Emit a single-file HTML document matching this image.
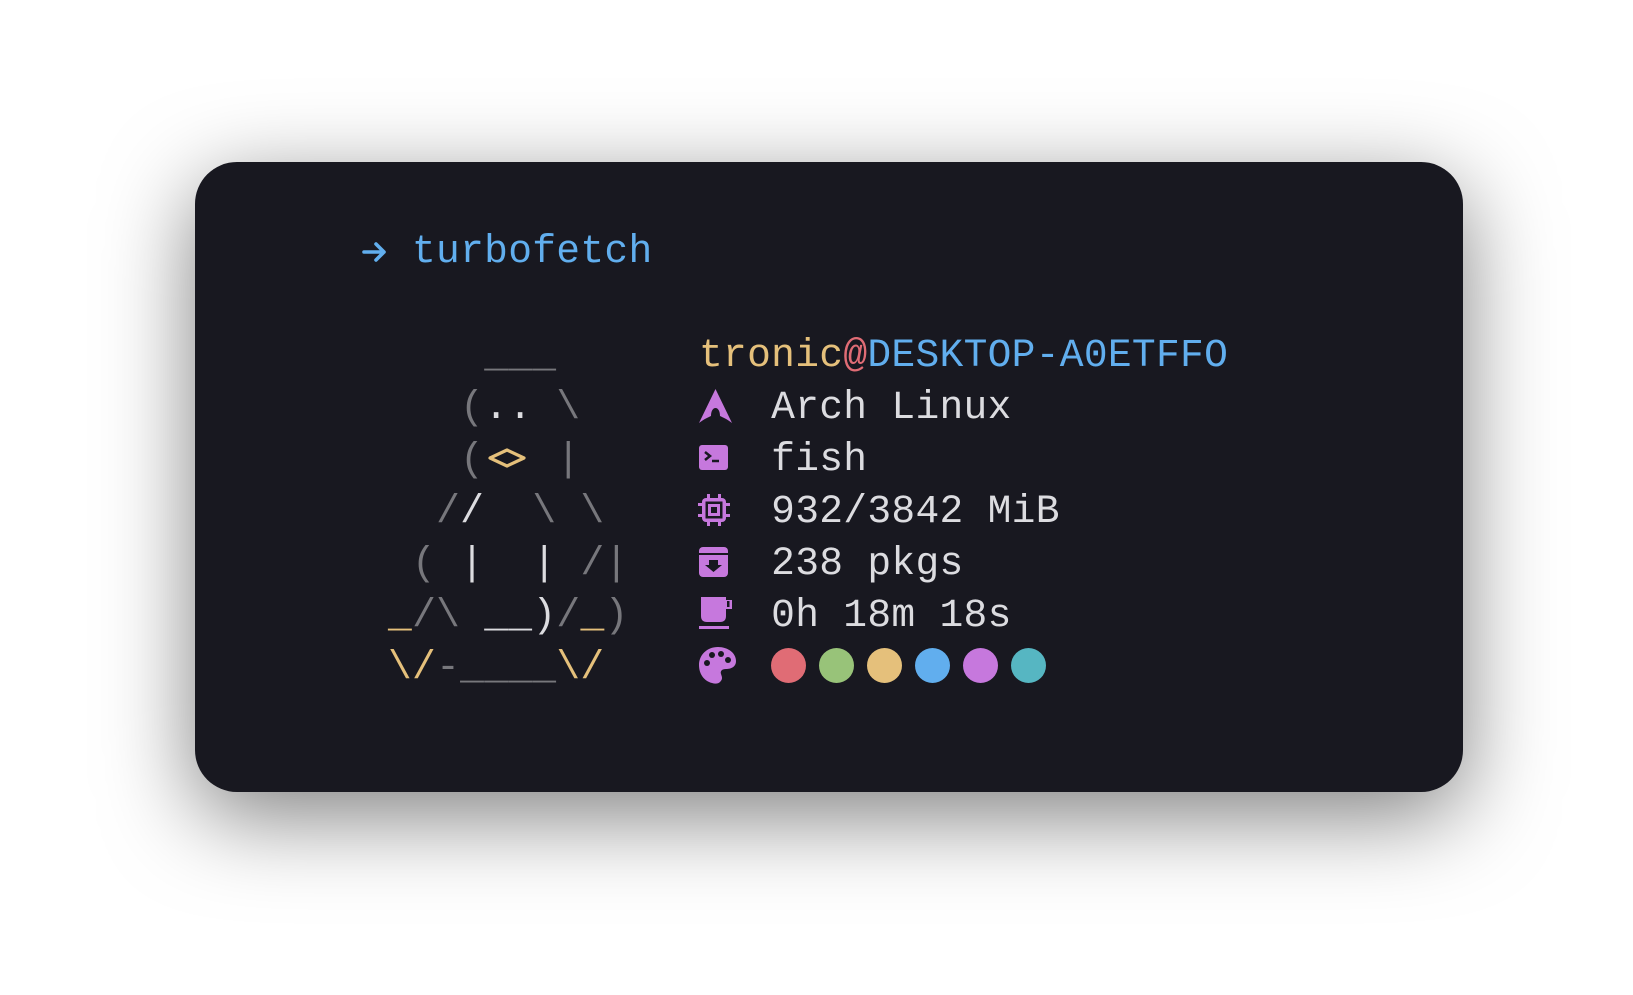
<!DOCTYPE html>
<html><head><meta charset="utf-8"><style>
html,body{margin:0;padding:0;background:#fff;width:1633px;height:995px;overflow:hidden}
.card{position:absolute;left:195px;top:162px;width:1268px;height:630px;border-radius:42px;background:#181820;box-shadow:0 24px 90px rgba(0,0,0,0.5)}
.l{position:absolute;font-family:"Liberation Mono","DejaVu Sans Mono",monospace;font-size:39.6px;letter-spacing:0.3px;line-height:52px;white-space:pre;color:#dcdce0}
.g{color:#77777c}.w{color:#dcdce0}.y{color:#e5c07b}.b{color:#61aeee}.r{color:#e06c75}
.dot{position:absolute;width:35px;height:35px;border-radius:50%;top:648px}
svg{position:absolute}
</style></head><body>
<div class="card"></div>
<svg style="left:362px;top:240px" width="26" height="24" viewBox="0 0 26 24"><path d="M2 12 H22 M14 4 L22 12 L14 20" stroke="#61aeee" stroke-width="3.6" fill="none" stroke-linecap="round" stroke-linejoin="round"/></svg>
<div class="l b" style="left:412px;top:226px">turbofetch</div>
<div class="l g" style="left:388px;top:330px">    ___</div>
<div class="l g" style="left:388px;top:382px">   (<span class="w">..</span> \</div>
<div class="l g" style="left:388px;top:434px">   (   |</div>
<svg style="left:487px;top:446px" width="40" height="24" viewBox="0 0 40 24"><path d="M3 12 L20 4 L37 12 L20 20 Z" fill="none" stroke="#e5c07b" stroke-width="3.2" stroke-linejoin="round"/></svg>
<div class="l g" style="left:388px;top:486px">  /<span class="w">/</span>  \ \</div>
<div class="l g" style="left:388px;top:538px"> ( <span class="w">|</span>  <span class="w">|</span> /|</div>
<div class="l g" style="left:388px;top:590px"><span class="y">_</span>/\ <span class="w">__)</span>/<span class="y">_</span>)</div>
<div class="l g" style="left:388px;top:642px"><span class="y">\/</span>-____<span class="y">\/</span></div>

<div class="l" style="left:699px;top:330px"><span class="y">tronic</span><span class="r">@</span><span class="b">DESKTOP-A0ETFFO</span></div>
<div class="l" style="left:699px;top:382px">   Arch Linux</div>
<div class="l" style="left:699px;top:434px">   fish</div>
<div class="l" style="left:699px;top:486px">   932/3842 MiB</div>
<div class="l" style="left:699px;top:538px">   238 pkgs</div>
<div class="l" style="left:699px;top:590px">   0h 18m 18s</div>

<svg style="left:698px;top:388px" width="36" height="36" viewBox="0 0 36 36"><path d="M17.5 1 L34 35 C29 31 24 29 22 28 C22 23 20 20 17.5 20 C15 20 13 23 13 28 C11 29 6 31 1 35 Z" fill="#c678dd"/></svg>
<svg style="left:698px;top:444px" width="32" height="28" viewBox="0 0 32 28"><rect x="1" y="1" width="29" height="25" rx="3" fill="#c678dd"/><path d="M7 8 L12 12 L7 16" stroke="#181820" stroke-width="2.5" fill="none"/><path d="M14 17 H21" stroke="#181820" stroke-width="2.5"/></svg>
<svg style="left:698px;top:494px" width="32" height="32" viewBox="0 0 32 32"><g fill="#c678dd"><rect x="4" y="4" width="24" height="24" rx="4"/><rect x="9" y="0" width="3" height="5"/><rect x="20" y="0" width="3" height="5"/><rect x="9" y="27" width="3" height="5"/><rect x="20" y="27" width="3" height="5"/><rect x="0" y="9" width="5" height="3"/><rect x="0" y="20" width="5" height="3"/><rect x="27" y="9" width="5" height="3"/><rect x="27" y="20" width="5" height="3"/></g><rect x="7.5" y="7.5" width="17" height="17" fill="#181820"/><rect x="10" y="10" width="12" height="12" fill="#c678dd"/><rect x="13" y="13" width="6" height="6" fill="#181820"/></svg>
<svg style="left:698px;top:546px" width="32" height="32" viewBox="0 0 32 32"><rect x="1" y="1" width="29" height="30" rx="4" fill="#c678dd"/><path d="M1 8 H30" stroke="#181820" stroke-width="2"/><path d="M11 14 H20 V19 H24 L15.5 26 L7 19 H11 Z" fill="#181820"/></svg>
<svg style="left:698px;top:596px" width="36" height="34" viewBox="0 0 36 34"><path d="M3 1 H28 V4 H34 V13 H28 V20 C28 24 26 26 22 26 H9 C5 26 3 24 3 20 Z" fill="#c678dd"/><rect x="29" y="5" width="2.5" height="6" fill="#181820"/><rect x="1" y="30" width="30" height="3" fill="#c678dd"/></svg>
<svg style="left:698px;top:646px" width="40" height="40" viewBox="0 0 40 40"><path d="M20 1 C30 1 38 7 38 15 C38 21 33 23 28 23 C24 23 22 25 23 28 C24 31 25 33 22 36 C20 38 17 38 14 37 C6 35 1 28 1 19 C1 9 9 1 20 1 Z" fill="#c678dd"/><g fill="#181820"><circle cx="9" cy="17" r="3"/><circle cx="14" cy="9" r="3"/><circle cx="23" cy="8" r="3"/><circle cx="30" cy="14" r="3"/></g></svg>

<div class="dot" style="left:771px;background:#e06c75"></div>
<div class="dot" style="left:819px;background:#98c379"></div>
<div class="dot" style="left:867px;background:#e5c07b"></div>
<div class="dot" style="left:915px;background:#61aeee"></div>
<div class="dot" style="left:963px;background:#c678dd"></div>
<div class="dot" style="left:1011px;background:#56b6c2"></div>
</body></html>
